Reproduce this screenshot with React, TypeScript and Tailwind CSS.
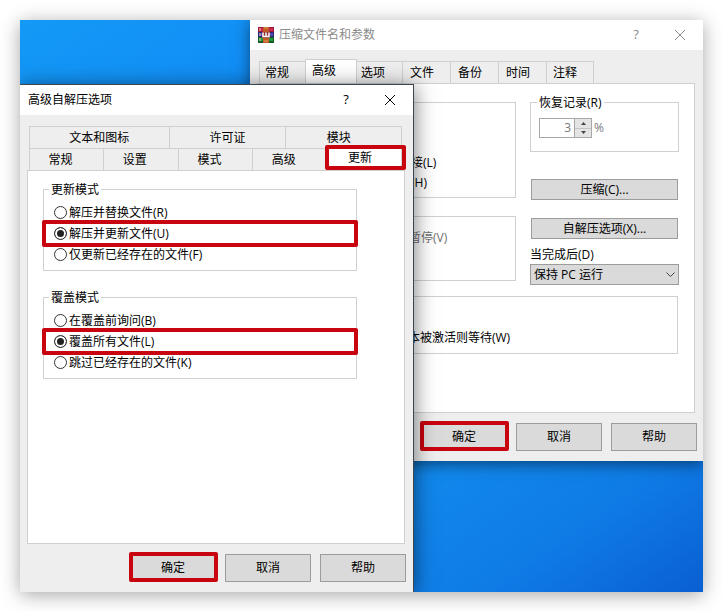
import type { ReactNode } from "react";

const FONT = "font-['Open_Sans','Noto_Sans_CJK_SC',sans-serif]";

function Highlight({ className }: { className: string }) {
  return (
    <span
      aria-hidden="true"
      className={`pointer-events-none absolute rounded-xs border-4 border-[#c8040f] ${className}`}
    />
  );
}

function CloseIcon() {
  return (
    <svg width="12" height="12" viewBox="0 0 12 12" fill="none" stroke="currentColor" aria-hidden="true">
      <path d="M1 1L11 11M11 1L1 11" />
    </svg>
  );
}

function ArchiveIcon() {
  return (
    <svg width="16" height="16" viewBox="0 0 16 16" aria-hidden="true">
      <rect width="16" height="16" fill="#4a1830" />
      <rect width="16" height="5" fill="#9c1840" />
      <rect x="1" y="1" width="14" height="3" fill="#c8284a" />
      <rect y="5" width="16" height="5" fill="#2c2878" />
      <rect x="1" y="6" width="14" height="3" fill="#5048b0" />
      <rect y="10" width="16" height="6" fill="#145c28" />
      <rect x="1" y="11" width="14" height="3" fill="#24983c" />
      <path d="M2 1v3M2 6v3M2 11v3" stroke="#f0d0a8" />
      <rect x="5" y="0" width="6" height="16" fill="#c05a28" />
      <path d="M6 1h4M6 14h4" stroke="#e0a050" />
      <rect x="4" y="5" width="8" height="6" fill="#8c3030" />
      <path d="M5 5.500v4h6v-4M8 5.500v4" fill="none" stroke="#fff" strokeWidth="1.5" />
    </svg>
  );
}

function TitleBar({ title, icon, muted }: { title: string; icon?: ReactNode; muted?: boolean }) {
  return (
    <header
      className={`flex h-[30px] items-center gap-[5px] bg-white px-2 ${muted ? "text-[#8a8a8a]" : "text-black"}`}
    >
      {icon}
      <h2 className="flex-1">{title}</h2>
      <button type="button" aria-label="帮助" className="w-12 text-[13px]">
        ?
      </button>
      <button type="button" aria-label="关闭" className="flex w-[30px] justify-center">
        <CloseIcon />
      </button>
    </header>
  );
}

function DialogButtons({ name, className }: { name: string; className: string }) {
  return (
    <footer className={`flex justify-end gap-[9px] py-[10px] ${className}`}>
      {["确定", "取消", "帮助"].map((label) => (
        <button
          key={`${name}-${label}`}
          type="button"
          className="relative h-7 w-[86px] border border-[#9c9c9c] bg-[#dadada]"
        >
          {label}
          {label === "确定" && <Highlight className="-top-[3px] -right-[3px] -bottom-px -left-[2px]" />}
        </button>
      ))}
    </footer>
  );
}

function BackTab({ label, className }: { label: string; className?: string }) {
  return (
    <button
      type="button"
      role="tab"
      aria-selected={false}
      className={`h-[22px] border-t border-[#d0d0d0] text-left ${className ?? "w-12 border-r pl-[7px]"}`}
    >
      {label}
    </button>
  );
}

function ArchiveWindow() {
  return (
    <section className="absolute top-0 right-0 flex w-[453px] flex-col bg-[#eee] shadow-[0_3px_14px_rgba(0,0,0,0.5)]">
      <TitleBar title="压缩文件名和参数" icon={<ArchiveIcon />} muted />
      <div role="tablist" className="flex items-end pt-[9px] pl-[9px]">
        <BackTab label="常规" className="w-[46px] border-l pl-[5px]" />
        <button
          type="button"
          role="tab"
          aria-selected={true}
          className="-mb-px h-[25px] w-[52px] border border-b-0 border-[#d0d0d0] bg-white pb-[2px] pl-[6px] text-left"
        >
          高级
        </button>
        <BackTab label="选项" className="w-[46px] border-r pl-1" />
        <BackTab label="文件" />
        <BackTab label="备份" />
        <BackTab label="时间" />
        <BackTab label="注释" className="w-[47px] border-r pl-[6px]" />
      </div>
      <div className="mr-2 ml-[7px] border border-[#d0d0d0] bg-white pt-[10px] pr-[15px] pb-[58px] pl-[10px]">
        <div className="flex gap-[14px]">
          <div className="flex flex-1 flex-col gap-[18px] pt-2">
            <div className="border border-[#d0d0d0] pt-[50px] pb-1 pl-[142px] leading-5">
              <p>接(L)</p>
              <p>(H)</p>
            </div>
            <div className="border border-[#d0d0d0] pt-[11px] pb-8 pl-[140px] leading-5 text-[#707070]">
              <p>暂停(V)</p>
            </div>
          </div>
          <div className="flex w-[149px] flex-col">
            <fieldset className="mb-[27px] border border-[#d0d0d0] pt-[7px] pb-[13px]">
              <legend className="ml-[6px] px-[2px] leading-[17px]">恢复记录(R)</legend>
              <div className="flex items-center gap-[2px] pl-2 text-[#7a7a7a]">
                <div className="flex h-5 w-[53px] border border-[#a8a8a8] bg-white">
                  <input
                    aria-label="恢复记录(R)"
                    defaultValue="3"
                    className="w-0 flex-1 pr-[3px] text-right outline-none"
                  />
                  <div className="flex w-[17px] flex-col border-l border-[#a8a8a8] bg-[#e4e4e4]">
                    <button
                      type="button"
                      aria-label="增加"
                      className="flex flex-1 items-center justify-center border-b border-[#c4c4c4]"
                    >
                      <svg width="5" height="3" viewBox="0 0 5 3" fill="#444" aria-hidden="true">
                        <path d="M0 3L2.500 0L5 3Z" />
                      </svg>
                    </button>
                    <button type="button" aria-label="减少" className="flex flex-1 items-center justify-center">
                      <svg width="5" height="3" viewBox="0 0 5 3" fill="#444" aria-hidden="true">
                        <path d="M0 0L2.500 3L5 0Z" />
                      </svg>
                    </button>
                  </div>
                </div>
                <span>%</span>
              </div>
            </fieldset>
            <button type="button" className="mx-px mb-[18px] h-[21px] border border-[#9c9c9c] bg-[#dadada]">
              压缩(C)...
            </button>
            <button type="button" className="mx-px mb-[7px] h-[21px] border border-[#9c9c9c] bg-[#dadada]">
              自解压选项(X)...
            </button>
            <label htmlFor="when-done" className="leading-[18px]">
              当完成后(D)
            </label>
            <div className="relative">
              <select
                id="when-done"
                className="h-[21px] w-full appearance-none border border-[#9c9c9c] bg-[#dadada] pl-[3px] leading-[19px]"
              >
                <option>保持 PC 运行</option>
              </select>
              <svg
                width="9"
                height="6"
                viewBox="0 0 9 6"
                fill="none"
                stroke="#444"
                aria-hidden="true"
                className="pointer-events-none absolute top-2 right-1"
              >
                <path d="M0.500 0.500L4.500 4.500L8.500 0.500" />
              </svg>
            </div>
          </div>
        </div>
        <div className="mt-[11px] mr-px border border-[#d0d0d0] pt-[31px] pb-[5px] pl-[139px] leading-5">
          <p>本被激活则等待(W)</p>
        </div>
      </div>
      <DialogButtons name="archive" className="pr-[6px]" />
    </section>
  );
}

type Choice = { label: string; checked?: boolean };

function RadioGroup({ legend, name, choices }: { legend: string; name: string; choices: Choice[] }) {
  return (
    <fieldset className="border border-[#d0d0d0] pt-1 pb-[5px]">
      <legend className="ml-[5px] px-[2px] leading-[17px]">{legend}</legend>
      {choices.map(({ label, checked }) => (
        <label key={label} className="relative flex h-[21px] items-center gap-[2px] pl-[10px]">
          <input
            type="radio"
            name={name}
            defaultChecked={checked}
            className="size-[13px] appearance-none rounded-full border border-[#333] bg-white checked:bg-[#222] checked:shadow-[inset_0_0_0_2px_#fff]"
          />
          {label}
          {checked && <Highlight className="-inset-x-[2px] -inset-y-[3px]" />}
        </label>
      ))}
    </fieldset>
  );
}

function SfxWindow() {
  return (
    <section className="absolute bottom-0 left-0 flex w-[394px] flex-col border-t border-r border-[#3c4650] bg-[#eee] shadow-[0_3px_20px_rgba(0,0,0,0.55)]">
      <TitleBar title="高级自解压选项" />
      <div role="tablist" className="mt-[11px] mr-[11px] ml-[9px] border-x border-[#d0d0d0]">
        <div className="grid grid-cols-[140fr_117fr_115fr] divide-x divide-[#d0d0d0] border-t border-[#d0d0d0]">
          {["文本和图标", "许可证", "模块"].map((label) => (
            <button key={label} type="button" role="tab" aria-selected={false} className="h-[21px] last:pr-[10px]">
              {label}
            </button>
          ))}
        </div>
        <div className="grid grid-cols-[74fr_75fr_75fr_74fr_74fr] divide-x divide-[#d0d0d0] border-t border-[#d0d0d0]">
          {["常规", "设置", "模式", "高级"].map((label) => (
            <button key={label} type="button" role="tab" aria-selected={false} className="h-[21px] pr-3">
              {label}
            </button>
          ))}
          <button type="button" role="tab" aria-selected={true} className="relative bg-white pr-2 pb-1">
            更新
            <Highlight className="-top-1 -right-[5px] bottom-0 -left-[2px]" />
          </button>
        </div>
      </div>
      <div className="mr-2 ml-[7px] flex flex-col gap-[18px] border border-[#d0d0d0] bg-white pt-[10px] pr-[47px] pb-[164px] pl-[15px]">
        <RadioGroup
          legend="更新模式"
          name="update"
          choices={[
            { label: "解压并替换文件(R)" },
            { label: "解压并更新文件(U)", checked: true },
            { label: "仅更新已经存在的文件(F)" },
          ]}
        />
        <RadioGroup
          legend="覆盖模式"
          name="overwrite"
          choices={[
            { label: "在覆盖前询问(B)" },
            { label: "覆盖所有文件(L)", checked: true },
            { label: "跳过已经存在的文件(K)" },
          ]}
        />
      </div>
      <DialogButtons name="sfx" className="pr-[7px]" />
    </section>
  );
}

export default function App() {
  return (
    <main className={`min-h-screen bg-white p-5 text-xs text-black ${FONT}`}>
      <div className="shadow-[0_3px_18px_rgba(0,0,0,0.35)]">
        <div className="relative min-h-[572px] overflow-hidden bg-[linear-gradient(145deg,#1399f6_0%,#1085f5_35%,#128cee_65%,#0f7ce6_85%,#0a5fd3_100%)]">
          <ArchiveWindow />
          <SfxWindow />
        </div>
      </div>
    </main>
  );
}
